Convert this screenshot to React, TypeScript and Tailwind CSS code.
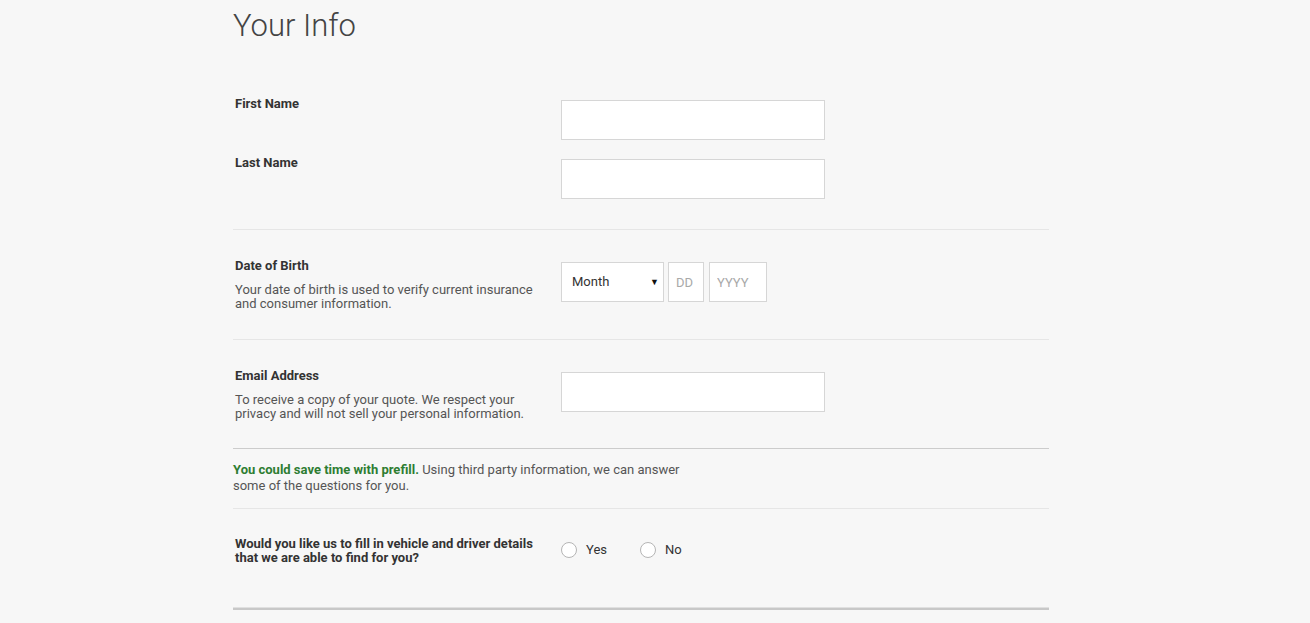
import React from 'react';

const font = { fontFamily: 'Roboto, "Liberation Sans", Arial, sans-serif' };

function Label({ children }: { children: React.ReactNode }) {
  return <div className="text-[13px] leading-[14px] font-bold text-[#333]">{children}</div>;
}

function Hint({ children }: { children: React.ReactNode }) {
  return <div className="mt-[10px] text-[13px] leading-[14px] text-[#555]">{children}</div>;
}

function TextInput({ className = '', placeholder }: { className?: string; placeholder?: string }) {
  return (
    <input
      placeholder={placeholder}
      className={`h-[40px] border border-[#d6d6d6] bg-white px-[7px] text-[13px] text-[#333] placeholder:text-[#a9a9a9] outline-none ${className}`}
    />
  );
}

function Radio({ label }: { label: string }) {
  return (
    <label className="flex items-center gap-[9px] text-[13px] text-[#333]">
      <span className="block h-[16px] w-[16px] rounded-full border-[1.5px] border-[#b5b5b5] bg-white" />
      {label}
    </label>
  );
}

export default function App() {
  return (
    <div className="min-h-[623px] w-full bg-[#f7f7f7]" style={font}>
      <div className="ml-[233px] w-[816px]">
        <h1 className="pt-[6px] text-[31px] leading-[40px] font-light text-[#444]">Your Info</h1>

        {/* Names */}
        <div className="mt-[51px] flex flex-col gap-[16px]">
          <div className="flex">
            <div className="w-[328px] pl-[2px]">
              <Label>First Name</Label>
            </div>
            <TextInput className="mt-[3px] w-[264px]" />
          </div>
          <div className="flex">
            <div className="w-[328px] pl-[2px]">
              <Label>Last Name</Label>
            </div>
            <TextInput className="mt-[3px] w-[264px]" />
          </div>
        </div>

        <div className="mt-[30px] h-px bg-[#e6e6e6]" />

        {/* Date of birth */}
        <div className="flex pt-[29px] pb-[28px]">
          <div className="w-[328px] pl-[2px]">
            <Label>Date of Birth</Label>
            <Hint>
              Your date of birth is used to verify current insurance
              <br />
              and consumer information.
            </Hint>
          </div>
          <div className="mt-[3px] flex gap-[4px]">
            <div className="relative flex h-[40px] w-[103px] items-center border border-[#d6d6d6] bg-white pl-[10px] text-[13px] text-[#333]">
              Month
              <span className="absolute right-[4px] top-[13px] text-[9px] text-[#111]">▼</span>
            </div>
            <TextInput className="w-[36px]" placeholder="DD" />
            <TextInput className="ml-[1px] w-[58px]" placeholder="YYYY" />
          </div>
        </div>

        <div className="h-px bg-[#e6e6e6]" />

        {/* Email */}
        <div className="flex pt-[29px] pb-[27px]">
          <div className="w-[328px] pl-[2px]">
            <Label>Email Address</Label>
            <Hint>
              To receive a copy of your quote. We respect your
              <br />
              privacy and will not sell your personal information.
            </Hint>
          </div>
          <TextInput className="mt-[3px] w-[264px]" />
        </div>

        <div className="h-px bg-[#cccccc]" />

        {/* Prefill */}
        <p className="pt-[13px] pb-[14px] text-[13px] leading-[16px] text-[#555]">
          <span className="font-bold text-[#2e7d32]">You could save time with prefill.</span> Using third party
          information, we can answer
          <br />
          some of the questions for you.
        </p>

        <div className="h-px bg-[#e6e6e6]" />

        <div className="flex items-center pt-[28px]">
          <div className="w-[328px] pl-[2px]">
            <Label>
              Would you like us to fill in vehicle and driver details
              <br />
              that we are able to find for you?
            </Label>
          </div>
          <div className="-mt-[3px] flex gap-[33px]">
            <Radio label="Yes" />
            <Radio label="No" />
          </div>
        </div>

        <div className="mt-[42px] h-[3px] border-t border-[#e0e0e0] bg-[#c8c8c8]" />
      </div>
    </div>
  );
}
